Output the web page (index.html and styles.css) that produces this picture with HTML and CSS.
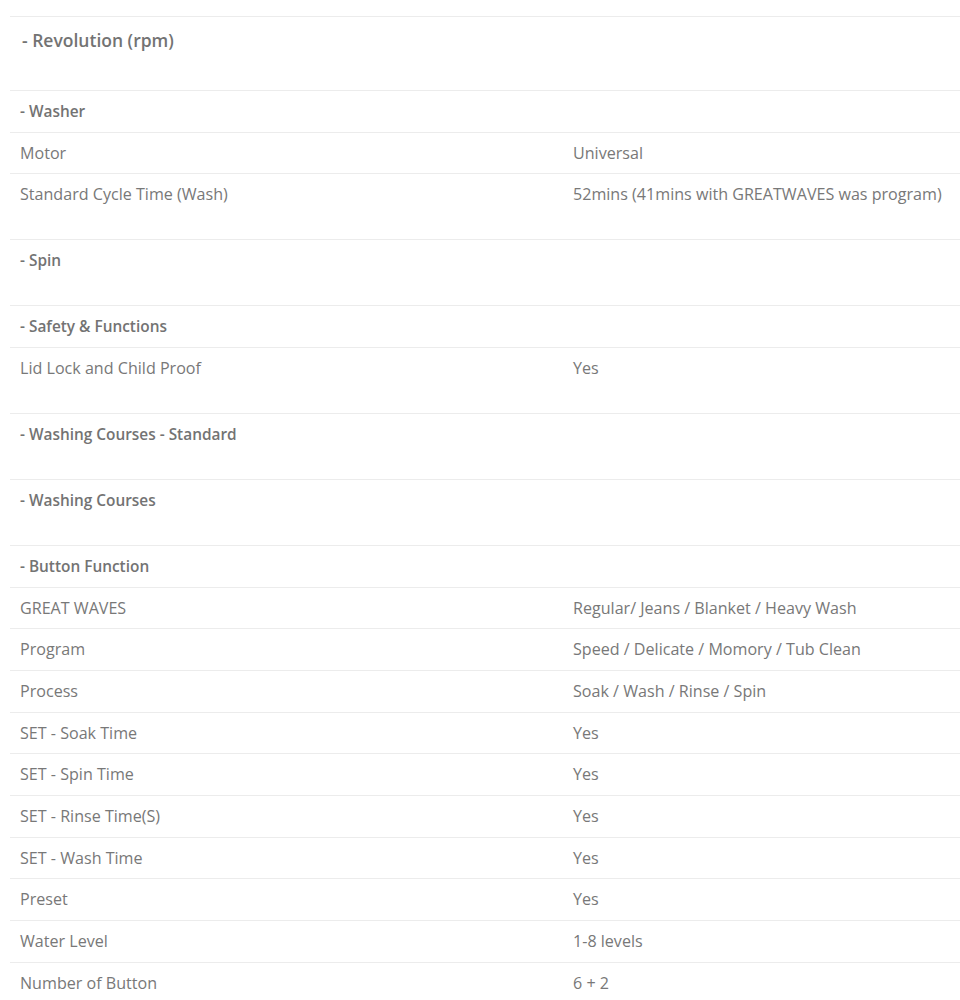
FILE: index.html
```html
<!DOCTYPE html>
<html>
<head>
<meta charset="utf-8">
<link rel="stylesheet" href="styles.css">
</head>
<body>
<div class="spec">
  <div class="title">- Revolution (rpm)</div>
  <div class="row"><div class="cell head">- Washer</div><div class="cell"></div></div>
  <div class="row"><div class="cell">Motor</div><div class="cell">Universal</div></div>
  <div class="row tall"><div class="cell">Standard Cycle Time (Wash)</div><div class="cell">52mins (41mins with GREATWAVES was program)</div></div>
  <div class="row tall"><div class="cell head">- Spin</div><div class="cell"></div></div>
  <div class="row"><div class="cell head">- Safety &amp; Functions</div><div class="cell"></div></div>
  <div class="row tall"><div class="cell">Lid Lock and Child Proof</div><div class="cell">Yes</div></div>
  <div class="row tall"><div class="cell head">- Washing Courses - Standard</div><div class="cell"></div></div>
  <div class="row tall"><div class="cell head">- Washing Courses</div><div class="cell"></div></div>
  <div class="row"><div class="cell head">- Button Function</div><div class="cell"></div></div>
  <div class="row"><div class="cell">GREAT WAVES</div><div class="cell">Regular/ Jeans / Blanket / Heavy Wash</div></div>
  <div class="row"><div class="cell">Program</div><div class="cell">Speed / Delicate / Momory / Tub Clean</div></div>
  <div class="row"><div class="cell">Process</div><div class="cell">Soak / Wash / Rinse / Spin</div></div>
  <div class="row"><div class="cell">SET - Soak Time</div><div class="cell">Yes</div></div>
  <div class="row"><div class="cell">SET - Spin Time</div><div class="cell">Yes</div></div>
  <div class="row"><div class="cell">SET - Rinse Time(S)</div><div class="cell">Yes</div></div>
  <div class="row"><div class="cell">SET - Wash Time</div><div class="cell">Yes</div></div>
  <div class="row"><div class="cell">Preset</div><div class="cell">Yes</div></div>
  <div class="row"><div class="cell">Water Level</div><div class="cell">1-8 levels</div></div>
  <div class="row"><div class="cell">Number of Button</div><div class="cell">6 + 2</div></div>
</div>
</body>
</html>
```
FILE: styles.css
```css
html, body {
  margin: 0;
  padding: 0;
  background: #ffffff;
}

body {
  font-family: "Open Sans", "Noto Sans", "Liberation Sans", sans-serif;
  color: #787878;
}

.spec {
  margin: 16px 0 0 10px;
}

.title {
  border-top: 1px solid #ececec;
  height: 74px;
  box-sizing: border-box;
  padding: 11px 0 0 12px;
  font-size: 17.5px;
  line-height: 24px;
  font-weight: 600;
  color: #737373;
}

.row {
  display: grid;
  grid-template-columns: 553px 1fr;
  border-top: 1px solid #ececec;
  height: 41.67px;
  box-sizing: border-box;
}

.row.tall {
  height: 66px;
}

.cell {
  padding: 8px 10px 0 10px;
  font-size: 16.1px;
  line-height: 24px;
  white-space: nowrap;
}

.cell.head {
  padding-top: 9px;
  font-size: 15.4px;
  font-weight: 600;
  color: #737373;
}
```
